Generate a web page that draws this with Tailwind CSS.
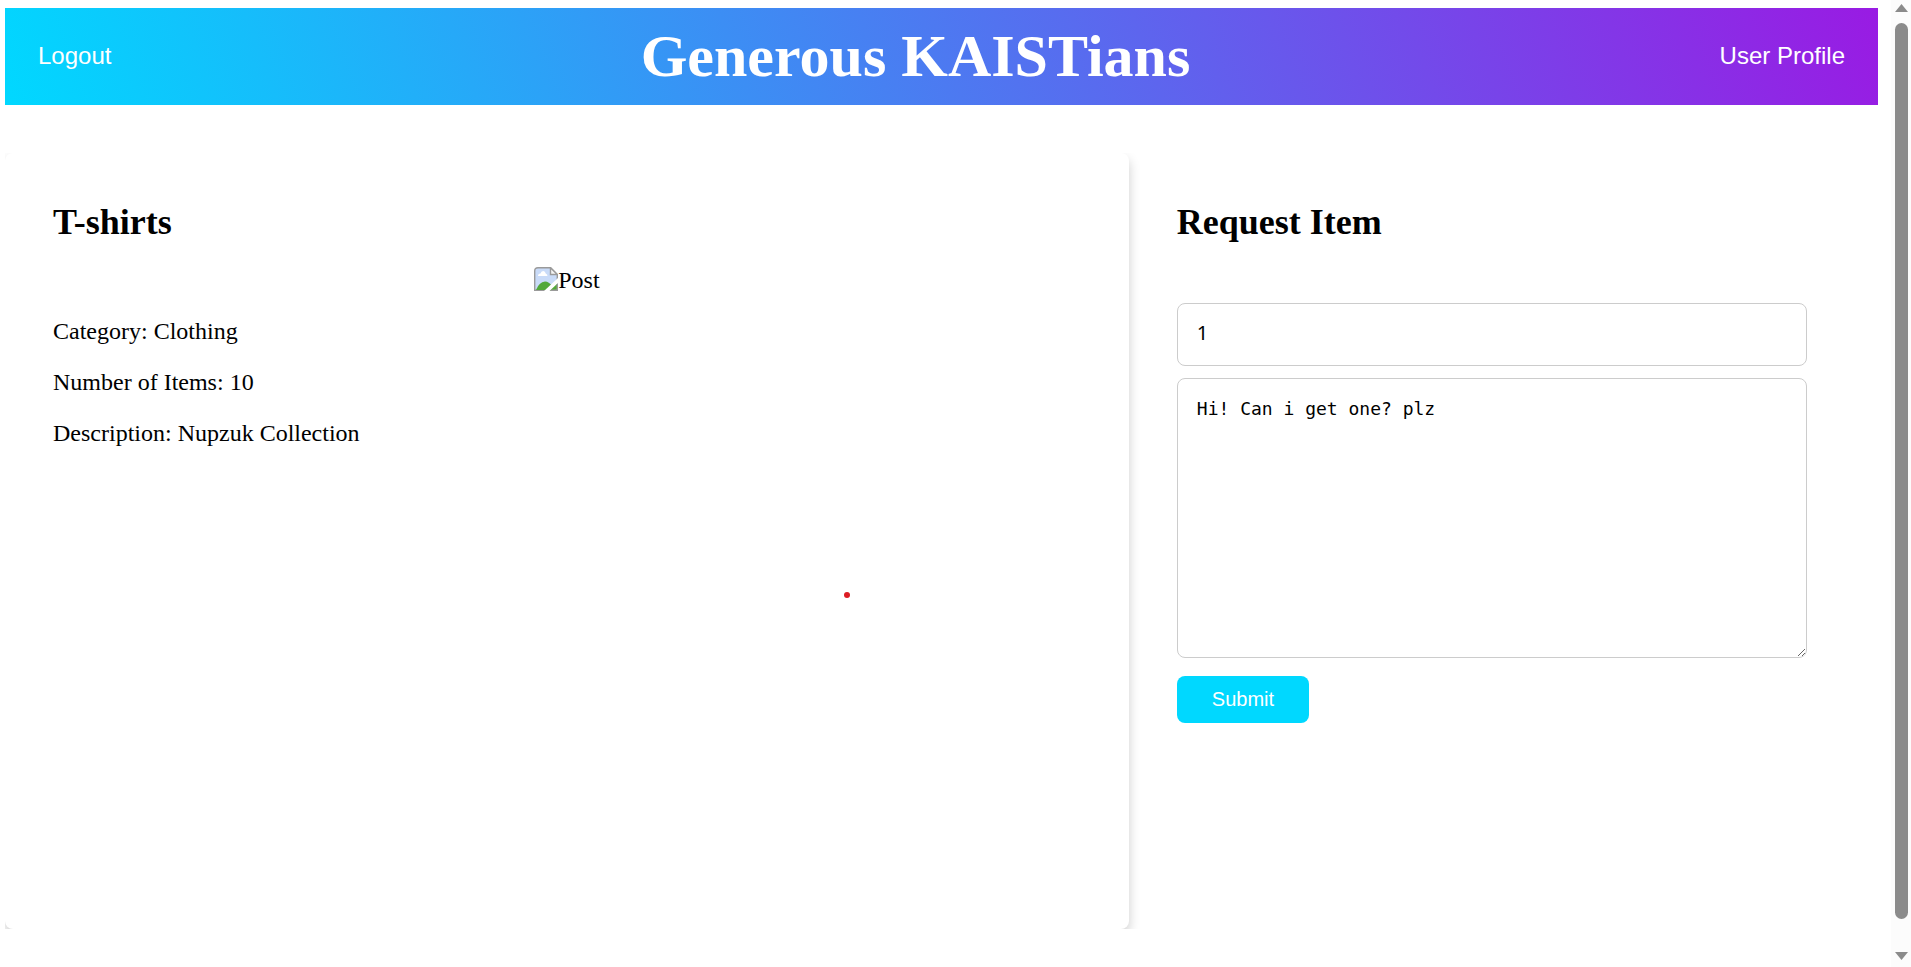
<!DOCTYPE html>
<html lang="en">
<head>
<meta charset="utf-8">
<title>Generous KAISTians</title>
<script src="https://cdn.jsdelivr.net/npm/@tailwindcss/browser@4"></script>
</head>
<body class="flex min-h-screen bg-white font-['Liberation_Serif',serif] text-2xl text-black">
  <div class="flex min-w-0 flex-1 flex-col pt-2 pr-[13px] pb-[38px] pl-[5px]">
    <header class="flex items-center justify-between bg-linear-[70deg,#00d8ff,#991be3] px-[33px] py-[15px] text-white">
      <a href="#" class="pb-0.5 font-['Liberation_Sans',sans-serif]">Logout</a>
      <h1 class="text-[60px] leading-[67px] font-bold">Generous KAISTians</h1>
      <a href="#" class="pb-0.5 font-['Liberation_Sans',sans-serif]">User Profile</a>
    </header>

    <main class="mt-12 flex flex-1 overflow-hidden">
      <section class="flex w-3/5 flex-col gap-6 rounded-lg px-12 pt-[49px] pb-12 leading-[27px] shadow-[0_6px_12px_rgba(0,0,0,0.2)]">
        <h2 class="text-4xl leading-[41px] font-bold">T-shirts</h2>
        <div class="flex items-start justify-center">
          <svg class="h-6 w-6" viewBox="0 0 24 24" role="img" aria-label="Missing image">
            <path d="M4 .7H16.500L23.300 7.500V23.300H.7V4Q.7.7 4 .7Z" fill="#c9dbf8" stroke="#9a9a9a" stroke-width="1.400"/>
            <path d="M4 9Q4 6.500 6.500 6.500Q7 4 9.200 4Q11.300 4 11.700 6.500Q13.500 7 13.500 9Z" fill="#fff"/>
            <path d="M2 23Q5 15 11 14.500Q15 14.500 18 19L14 23Z" fill="#52a93a"/>
            <path d="M16.500.7V7.500H23.300Z" fill="#f5f5f5" stroke="#9a9a9a" stroke-width="1.400"/>
            <path d="M17 23.300H23.300V17L21 16L14 23Z" fill="#52a93a"/>
            <path d="M10 24L24 11V16L15.500 24Z" fill="#fff"/>
            <path d="M17 23.300H23.300V17" fill="none" stroke="#9a9a9a" stroke-width="1.400"/>
          </svg>
          <span>Post</span>
        </div>
        <p>Category: Clothing</p>
        <p>Number of Items: 10</p>
        <p>Description: Nupzuk Collection</p>
      </section>

      <section class="w-2/5 pt-[49px] pr-[71px] pb-12 pl-12">
        <h2 class="text-4xl leading-[41px] font-bold">Request Item</h2>
        <form class="mt-[60px] flex flex-col items-start">
          <input type="text" value="1" aria-label="Number of items" class="w-full rounded-lg border border-[#ccc] px-[19px] pt-4 pb-5 font-['Noto_Sans',sans-serif] text-xl leading-[25px]">
          <textarea aria-label="Message" class="mt-3 h-[280px] w-full rounded-lg border border-[#ccc] px-[19px] py-[18px] font-['DejaVu_Sans_Mono',monospace] text-lg leading-6">Hi! Can i get one? plz</textarea>
          <button type="button" class="mt-[18px] rounded-lg bg-[#00d8ff] px-[35px] py-3 font-['Liberation_Sans',sans-serif] text-xl leading-[23px] text-white">Submit</button>
        </form>
      </section>
    </main>
  </div>

  <div class="flex w-5 flex-col items-center bg-[#fcfcfc] pt-1 pr-[3px] pb-[7px] pl-1" aria-hidden="true">
    <svg class="h-2 w-[13px]" viewBox="0 0 13 8"><path d="M6.500 0L13 8H0Z" fill="#8b8b8b"/></svg>
    <div class="mt-[11px] mb-[33px] w-[13px] flex-1 rounded-full bg-[#8b8b8b]"></div>
    <svg class="h-2 w-[13px]" viewBox="0 0 13 8"><path d="M0 0H13L6.500 8Z" fill="#8b8b8b"/></svg>
  </div>

  <span class="absolute top-[592px] left-[844px] h-1.5 w-1.5 rounded-full bg-[#dc1c24]"></span>
</body>
</html>
